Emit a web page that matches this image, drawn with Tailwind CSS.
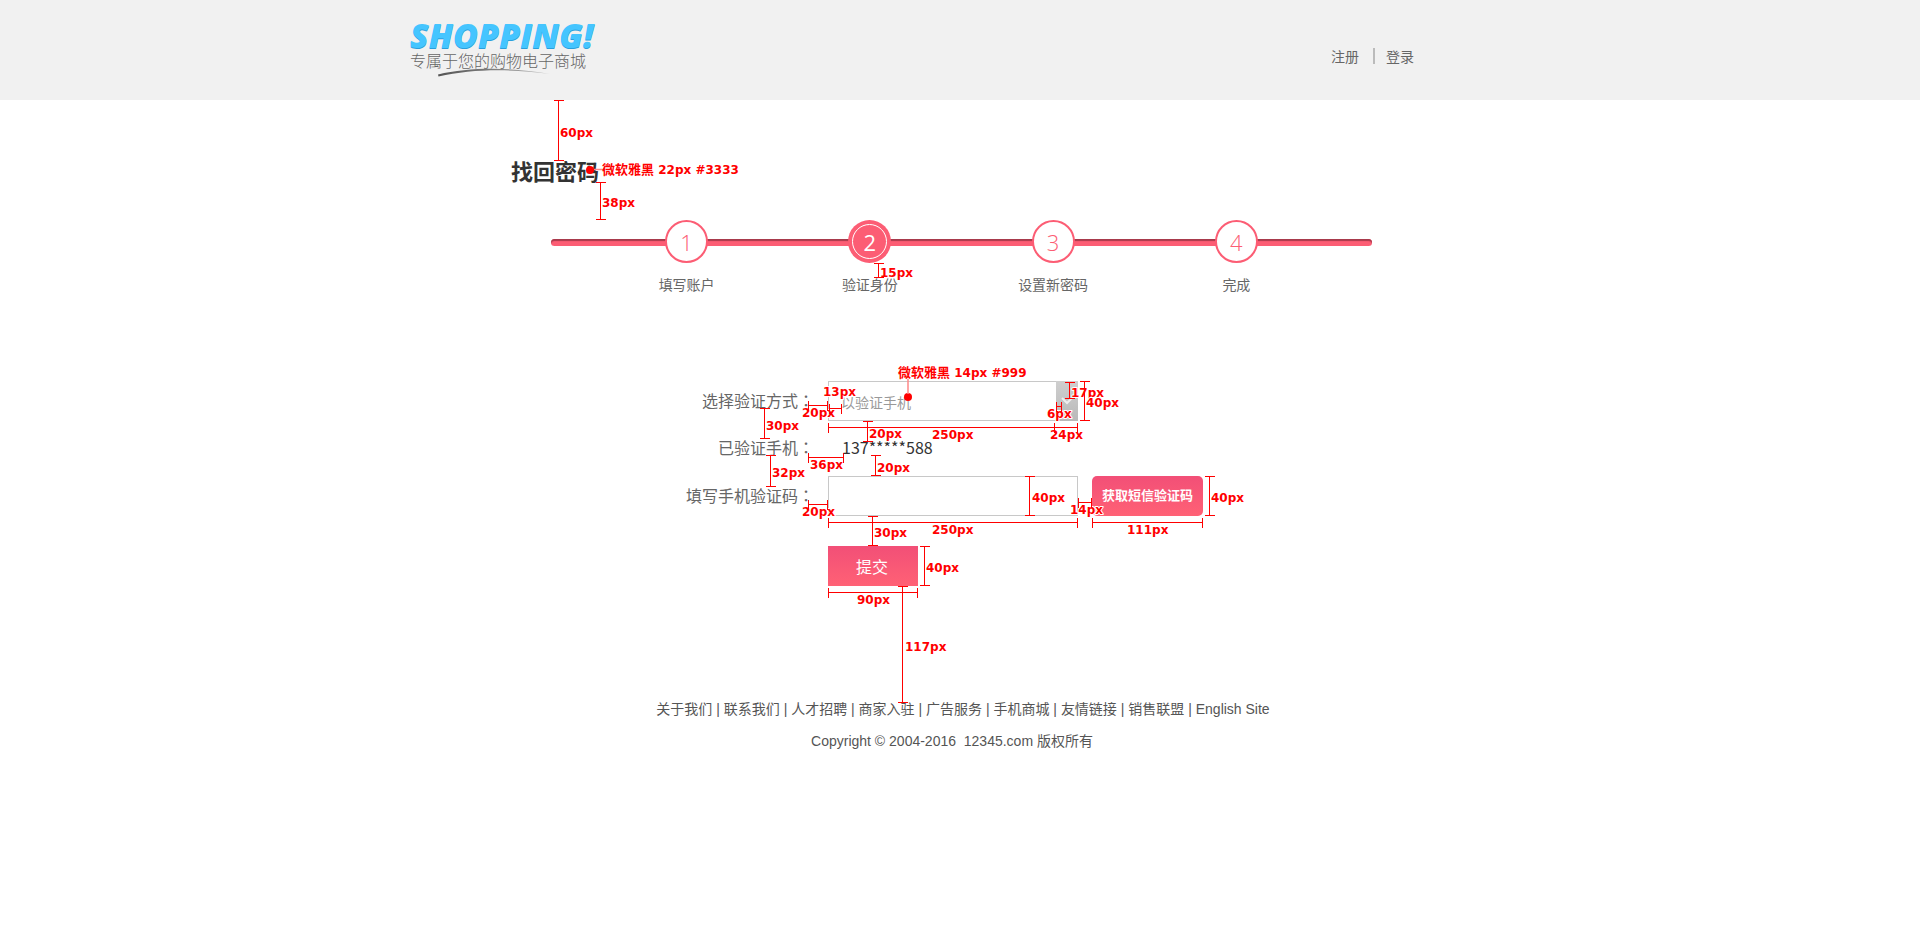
<!DOCTYPE html>
<html lang="zh-CN">
<head>
<meta charset="utf-8">
<meta name="viewport" content="width=device-width, initial-scale=1">
<title>找回密码</title>
<script src="https://cdn.jsdelivr.net/npm/@tailwindcss/browser@4"></script>
</head>
<body class="relative min-h-screen overflow-x-hidden bg-white font-['Noto_Sans_CJK_SC',sans-serif] text-[#666]">

<header class="bg-[#f1f1f1]">
  <div class="mx-auto flex h-[100px] max-w-[1100px] justify-between pr-24">
    <a href="#" class="block pt-[18px]">
      <span class="block font-['Open_Sans',sans-serif] text-[34px] leading-[34px] font-extrabold text-[#45c5ff] italic [text-shadow:0_1px_0_#2a9fdc]">SHOPPING!</span>
      <span class="block text-base leading-4 font-light text-[#666]">专属于您的购物电子商城</span>
      <svg class="ml-7 block" width="112" height="9" viewBox="0 0 112 9" aria-hidden="true">
        <defs><linearGradient id="sw"><stop offset="0" stop-color="#555"/><stop offset=".6" stop-color="#888"/><stop offset="1" stop-color="#ccc"/></linearGradient></defs>
        <path d="M0 6.500C32-1 72-1 112 6C72 .5 34 1 .5 8.500Z" fill="url(#sw)"/>
      </svg>
    </a>
    <nav class="flex items-center pt-3 text-sm">
      <a href="#">注册</a>
      <span class="mr-[11px] ml-3.5 h-4 w-0.5 bg-[#bbb]"></span>
      <a href="#">登录</a>
    </nav>
  </div>
</header>

<main class="mx-auto max-w-[898px] pt-[59px]">
  <h1 class="text-[22px] leading-[22px] font-bold text-[#333]">找回密码</h1>

  <div class="relative mt-[39px] mr-[37px] ml-10">
    <div class="absolute inset-x-0 top-[19px] h-[7px] rounded-full bg-[#fc5d74] shadow-[inset_0_2px_1px_#a83a4c]"></div>
    <ol class="relative grid grid-cols-4 px-11 text-center text-sm">
      <li class="flex flex-col items-center gap-3.5">
        <span class="flex size-[43px] items-center justify-center rounded-full border-2 border-[#fc5d74] bg-white font-['Open_Sans',sans-serif] text-[22px] leading-5 font-light text-[#fc5d74]">1</span>
        <span class="leading-[14px]">填写账户</span>
      </li>
      <li class="flex flex-col items-center gap-3.5">
        <span class="flex size-[43px] items-center justify-center rounded-full bg-[#fc5d74]">
          <span class="flex size-[35px] items-center justify-center rounded-full border border-white font-['Open_Sans',sans-serif] text-[22px] leading-5 text-white">2</span>
        </span>
        <span class="leading-[14px]">验证身份</span>
      </li>
      <li class="flex flex-col items-center gap-3.5">
        <span class="flex size-[43px] items-center justify-center rounded-full border-2 border-[#fc5d74] bg-white font-['Open_Sans',sans-serif] text-[22px] leading-5 font-light text-[#fc5d74]">3</span>
        <span class="leading-[14px]">设置新密码</span>
      </li>
      <li class="flex flex-col items-center gap-3.5">
        <span class="flex size-[43px] items-center justify-center rounded-full border-2 border-[#fc5d74] bg-white font-['Open_Sans',sans-serif] text-[22px] leading-5 font-light text-[#fc5d74]">4</span>
        <span class="leading-[14px]">完成</span>
      </li>
    </ol>
  </div>

  <form class="mt-[90px] grid grid-cols-[303px_1fr] items-center gap-x-3.5" onsubmit="return false">
    <label for="method" class="pb-[3px] text-right text-base leading-5">选择验证方式<span class="font-['Noto_Sans_CJK_TC',sans-serif]" lang="zh-TW">：</span></label>
    <div class="relative h-10 w-[250px]">
      <select id="method" class="size-full appearance-none border border-[#c8c8c8] bg-white pt-0.5 pl-3 text-sm text-[#999]">
        <option>以验证手机</option>
      </select>
      <span class="pointer-events-none absolute inset-y-0 right-0 flex w-[22px] items-center justify-center bg-linear-to-b from-[#cfcfcf] to-[#b9b9b9]">
        <svg width="12" height="8" viewBox="0 0 12 8" fill="none" stroke="#eee" stroke-width="2" aria-hidden="true"><path d="M1 1L6 6L11 1"/></svg>
      </span>
    </div>

    <span class="pb-[3px] text-right text-base leading-5">已验证手机<span class="font-['Noto_Sans_CJK_TC',sans-serif]" lang="zh-TW">：</span></span>
    <output class="flex h-[55px] items-center pb-[3px] pl-3.5 text-base text-[#333]">137*****588</output>

    <label for="code" class="pb-[3px] text-right text-base leading-5">填写手机验证码<span class="font-['Noto_Sans_CJK_TC',sans-serif]" lang="zh-TW">：</span></label>
    <div class="flex gap-3.5">
      <input id="code" type="text" class="h-10 w-[250px] border border-[#c8c8c8] px-3 text-sm">
      <button type="button" class="h-10 w-[111px] rounded-[5px] bg-linear-to-b from-[#f24f77] to-[#ff6175] pb-0.5 text-[13px] font-bold whitespace-nowrap text-white">获取短信验证码</button>
    </div>

    <button type="submit" class="col-start-2 mt-[30px] h-10 w-[90px] bg-linear-to-b from-[#f24f77] to-[#ff6175] pr-0.5 text-base text-white">提交</button>
  </form>
</main>

<footer class="mt-[116px] pb-10 text-center font-['Liberation_Sans','Noto_Sans_CJK_SC',sans-serif] text-sm leading-[14px] text-[#555]">
  <p class="pl-1.5"><a href="#">关于我们</a> | <a href="#">联系我们</a> | <a href="#">人才招聘</a> | <a href="#">商家入驻</a> | <a href="#">广告服务</a> | <a href="#">手机商城</a> | <a href="#">友情链接</a> | <a href="#">销售联盟</a> | <a href="#">English Site</a></p>
  <p class="mt-[18px] pr-4">Copyright © 2004-2016&nbsp; 12345.com 版权所有</p>
</footer>

<!-- Red-line spec layer: dimensions and type notes over the page -->
<svg class="pointer-events-none absolute top-0 left-1/2 -translate-x-1/2" width="1100" height="720" viewBox="410 0 1100 720">
  <g class="font-['DejaVu_Sans','Noto_Sans_CJK_SC',sans-serif] text-[12px] font-bold" fill="#f00" stroke="#fff" stroke-width="2" stroke-linejoin="round" paint-order="stroke">
    <text x="560" y="137">60px</text>
    <text x="602" y="174"><tspan class="text-[13px]">微软雅黑</tspan> 22px #3333</text>
    <text x="602" y="207">38px</text>
    <text x="880" y="277">15px</text>
    <text x="898" y="377"><tspan class="text-[13px]">微软雅黑</tspan> 14px #999</text>
    <text x="823" y="396">13px</text>
    <text x="802" y="417">20px</text>
    <text x="766" y="430">30px</text>
    <text x="869" y="438">20px</text>
    <text x="932" y="439">250px</text>
    <text x="1050" y="439">24px</text>
    <text x="1071" y="397">17px</text>
    <text x="1047" y="418">6px</text>
    <text x="1086" y="407">40px</text>
    <text x="810" y="469">36px</text>
    <text x="772" y="477">32px</text>
    <text x="877" y="472">20px</text>
    <text x="802" y="516">20px</text>
    <text x="1032" y="502">40px</text>
    <text x="1070" y="514">14px</text>
    <text x="1211" y="502">40px</text>
    <text x="932" y="534">250px</text>
    <text x="1127" y="534">111px</text>
    <text x="874" y="537">30px</text>
    <text x="926" y="572">40px</text>
    <text x="857" y="604">90px</text>
    <text x="905" y="651">117px</text>
  </g>
  <g fill="none" stroke="#f00" stroke-width="1" transform="translate(.5 .5)" shape-rendering="crispEdges">
    <path d="M553 100h10M558 100v60M553 160h10"/>
    <path d="M595 182h10M600 182v37M595 219h10"/>
    <path d="M873 263h10M878 263v14M873 277h10"/>
    <path d="M808 400v10M808 405h19M827 400v10"/>
    <path d="M829 403v10M829 408h12M841 403v10"/>
    <path d="M759 408h10M764 408v30M759 438h10"/>
    <path d="M862 421h10M867 421v20M862 441h10"/>
    <path d="M828 422v10M828 427h249M1054 422v10M1077 422v10"/>
    <path d="M1079 381h10M1084 381v39M1079 420h10"/>
    <path d="M1064 382h10M1069 382v16M1064 398h10"/>
    <path d="M1056 401v10M1056 406h5M1061 401v10"/>
    <path d="M808 452v10M808 457h35M843 452v10"/>
    <path d="M765 455h10M770 455v31M765 486h10"/>
    <path d="M870 455h10M875 455v20M870 475h10"/>
    <path d="M808 499v10M808 504h19M827 499v10"/>
    <path d="M1024 476h10M1029 476v39M1024 515h10"/>
    <path d="M1078 497v10M1078 502h13M1091 497v10"/>
    <path d="M1204 476h10M1209 476v39M1204 515h10"/>
    <path d="M828 517v10M828 522h249M1077 517v10"/>
    <path d="M1092 517v10M1092 522h110M1202 517v10"/>
    <path d="M867 516h10M872 516v29M867 545h10"/>
    <path d="M919 546h10M924 546v39M919 585h10"/>
    <path d="M828 587v10M828 592h89M917 587v10"/>
    <path d="M897 586h10M902 586v116M897 702h10"/>
  </g>
  <g fill="#f00">
    <circle cx="590" cy="170" r="4"/>
    <circle cx="908" cy="397" r="4"/>
    <path d="M594 169.500H602M908 379V394" stroke="#f88" stroke-width="1.500"/>
  </g>
</svg>
</body>
</html>
